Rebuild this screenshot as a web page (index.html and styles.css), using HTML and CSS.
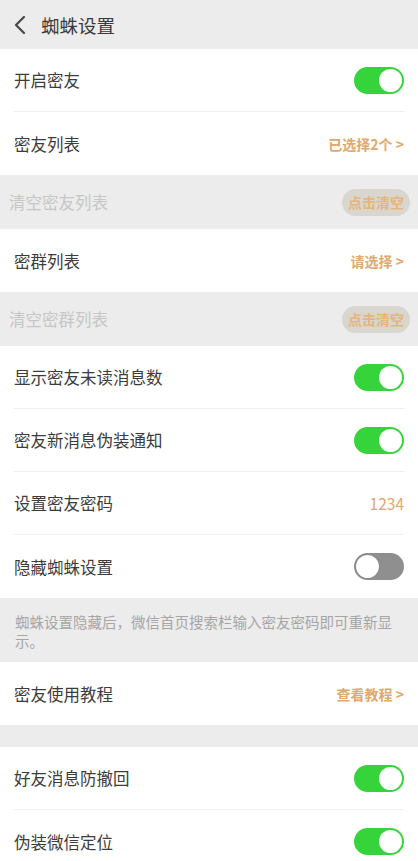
FILE: index.html
```html
<!DOCTYPE html>
<html lang="zh-CN">
<head>
    <meta charset="UTF-8">
    <meta name="viewport" content="width=device-width, initial-scale=1.0">
    <title>蜘蛛设置</title>
    <link rel="stylesheet" href="styles.css">
</head>
<body>
    <!-- Top bar -->
    <div class="nav">
        <svg class="back" width="12" height="20" viewBox="0 0 12 20">
            <path d="M10 2 L2 10 L10 18" fill="none" stroke="#474747" stroke-width="2.2" stroke-linecap="round" stroke-linejoin="round"/>
        </svg>
        <span class="title">蜘蛛设置</span>
    </div>

    <div class="group">
        <div class="row"><span>开启密友</span><span class="switch on"></span></div>
        <div class="row"><span>密友列表</span><span class="value">已选择2个 &gt;</span></div>
    </div>

    <div class="disabled-row"><span>清空密友列表</span><span class="pill">点击清空</span></div>

    <div class="group">
        <div class="row"><span>密群列表</span><span class="value">请选择 &gt;</span></div>
    </div>

    <div class="disabled-row"><span>清空密群列表</span><span class="pill">点击清空</span></div>

    <div class="group">
        <div class="row"><span>显示密友未读消息数</span><span class="switch on"></span></div>
        <div class="row"><span>密友新消息伪装通知</span><span class="switch on"></span></div>
        <div class="row"><span>设置密友密码</span><span class="value num">1234</span></div>
        <div class="row"><span>隐藏蜘蛛设置</span><span class="switch"></span></div>
    </div>

    <p class="note">蜘蛛设置隐藏后，微信首页搜索栏输入密友密码即可重新显示。</p>

    <div class="group">
        <div class="row"><span>密友使用教程</span><span class="value">查看教程 &gt;</span></div>
    </div>

    <div class="gap"></div>

    <div class="group">
        <div class="row"><span>好友消息防撤回</span><span class="switch on"></span></div>
        <div class="row"><span>伪装微信定位</span><span class="switch on"></span></div>
    </div>
</body>
</html>
```

FILE: styles.css
```css
* { box-sizing: border-box; margin: 0; padding: 0; }
body {
    background: #ececec;
    font-family: "Noto Sans CJK SC", "Noto Sans", sans-serif;
    color: #333;
    overflow: hidden;
}

/* Top bar */
.nav { height: 49px; display: flex; align-items: center; padding-left: 14px; gap: 15px; }
.title { font-size: 18.5px; color: #3a3a3a; }

/* White groups & rows */
.group { background: #fff; }
.row {
    height: 63px; margin: 0 14px; display: flex; align-items: center; justify-content: space-between;
    font-size: 16.5px; color: #3c3c3c; border-bottom: 1px solid #efefef;
}
.row:last-child { border-bottom: none; }

.value { font-size: 14px; font-weight: bold; color: #e0a86c; }
.value.num { font-size: 15.5px; font-weight: normal; color: #dfa66a; }

/* Switches */
.switch {
    position: relative; width: 50px; height: 27px; border-radius: 14px; background: #8f8f8f;
}
.switch::after {
    content: ""; position: absolute; top: 2px; left: 2px; width: 23px; height: 23px;
    border-radius: 50%; background: #fff; box-shadow: 0 0 1px rgba(0, 0, 0, 0.4);
}
.switch.on { background: #36d43b; }
.switch.on::after { left: 25px; box-shadow: none; }

/* Greyed-out rows */
.disabled-row {
    height: 54px; display: flex; align-items: center; justify-content: space-between;
    padding: 0 8px 0 9px; font-size: 16.5px; color: #c6c6c6;
}
.pill {
    width: 68px; height: 27px; border-radius: 14px; background: #d9d5cf;
    display: flex; align-items: center; justify-content: center;
    font-size: 14px; font-weight: bold; color: #e6b57c;
}

/* Hint text */
.note { padding: 14px 15px 12px; font-size: 14.5px; line-height: 19px; color: #a5a5a5; }

.gap { height: 22px; }
```
